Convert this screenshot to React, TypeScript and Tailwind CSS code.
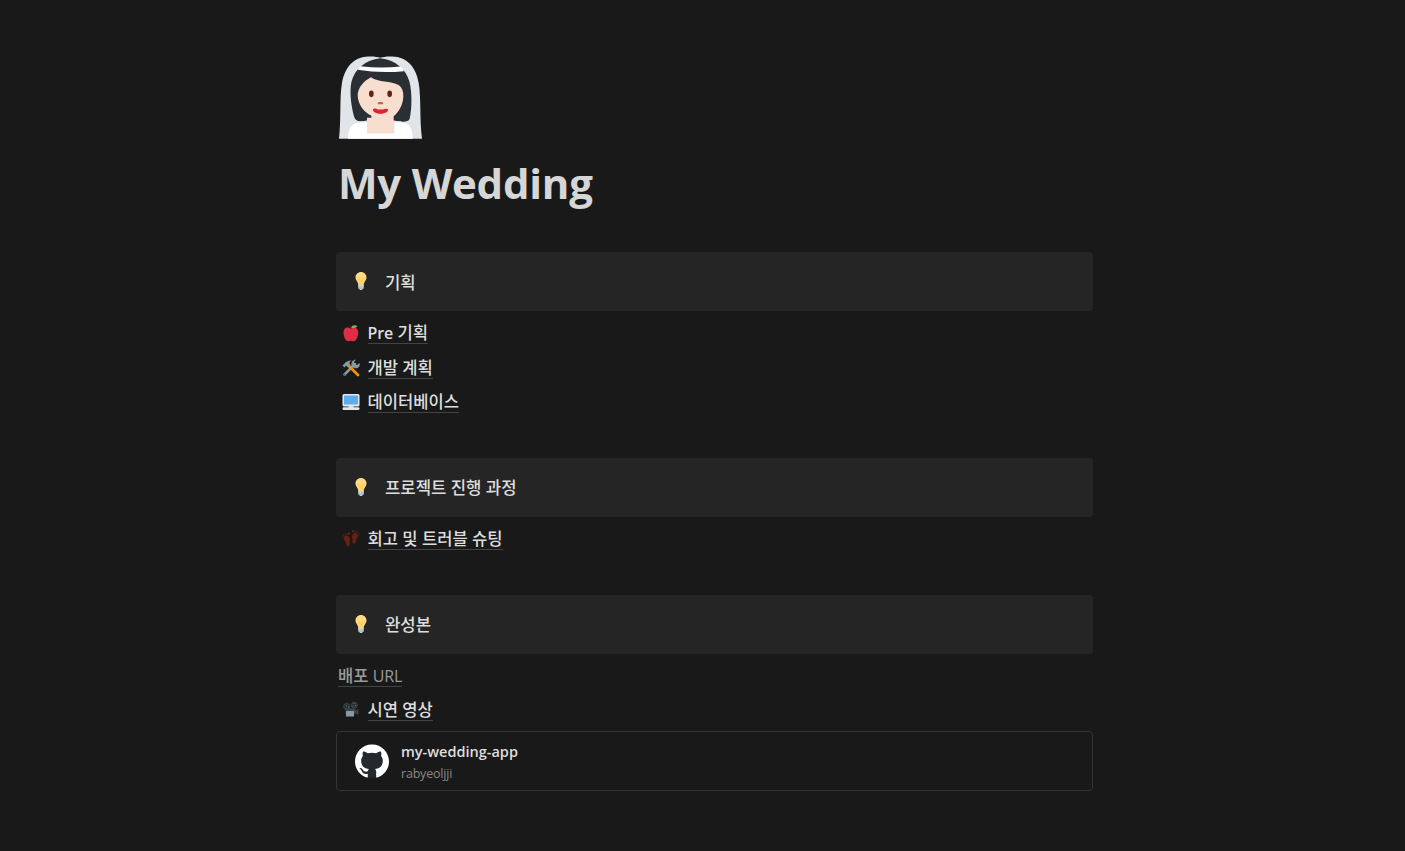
import type { ReactNode } from "react";
import { SiGithub } from "react-icons/si";

function Bride() {
  return (
    <svg viewBox="27 20 249 248" className="block h-[83px] w-[83px]">
      <path fill="#e1e4e8" d="M27 268C34 205 28 150 36 100C45 52 72 22 115 21C130 20 142 22 151 25C160 22 172 20 187 21C230 22 258 52 266 100C274 150 268 205 276 268Z" />
      <path fill="#292f33" d="M151 26C106 31 74 58 64 98C58 130 64 172 73 204C77 213 86 216 96 216H208C220 218 236 218 239 208C246 175 246 130 239 98C228 58 196 31 151 26Z" />
      <path fill="#e1e4e8" d="M88 215Q120 215 127 203H175Q182 215 215 215L212 225H90Z" />
      <path fill="#f7dece" d="M83 137C84 112 103 93 123 83C145 99 182 93 207 107C216 114 220 124 220 140C219 168 205 188 191 200V254H111V205H124V199C102 187 84 166 83 137Z" />
      <path fill="#fff" d="M54 268C54 235 65 219 91 219H111V252H193V219H211C238 219 248 236 248 268Z" />
      <path fill="#fff" d="M91 50Q151 58 212 51Q222 59 221 65Q151 72 83 61Q85 55 91 50Z" />
      <ellipse cx="124" cy="133" rx="7" ry="10" fill="#662113" />
      <ellipse cx="179" cy="133" rx="7" ry="10" fill="#662113" />
      <path d="M147 161H156" stroke="#c1694f" strokeWidth="7" strokeLinecap="round" />
      <path fill="#df1f32" d="M129 180C132 175 137 178 144 180H159C166 179 171 175 174 180C176 184 167 193 151 193C136 193 127 184 129 180Z" />
    </svg>
  );
}

function Bulb() {
  return (
    <svg viewBox="0 0 36 36" className="mb-[1px] block size-[18px]">
      <path fill="#ffd983" d="M29 11.06C29 17 23.4 19.3 23.4 26.9C23.4 28.2 22.7 28.9 21.5 28.9H14.5C13.3 28.9 12.6 28.2 12.6 26.9C12.6 19.3 7 17 7 11.06C7 5.1 11.9.14 18 .14S29 5.1 29 11.06Z" />
      <path fill="none" stroke="#ffcc4d" strokeWidth="1.8" d="M16 28V18.5L12 15Q10 12 13 11.5Q16 12 16 18.5H20Q20 12 23 11.5Q26 12 24 15L20 18.5V28" />
      <path fill="#ccd6dd" d="M12.5 26H23.5V32.5L21 34.5L19.5 36H16.5L15 34.5L12.5 32.5Z" />
      <path stroke="#8899a6" strokeWidth="1" d="M12.5 31L23.5 29M13 34L23.3 32" />
    </svg>
  );
}

function Apple() {
  return (
    <svg viewBox="0 0 36 36" className="block size-[18px]">
      <path fill="#dd2e44" d="M24 7C21 6.8 20 8.5 17.5 8.5S13 6.8 10 7C5.5 7.3 3 11.5 3 17C3 24 6.5 34.5 13 34.5C15 34.5 16 33.6 18 33.6S21 34.5 23 34.5C29 34.5 32.5 24 32.5 17C32.5 11 29 7.2 24 7Z" />
      <path fill="none" stroke="#662113" strokeWidth="2" d="M18 10Q17 4 14.5 2" />
      <path fill="#77b255" d="M18 7C20 2 26 1.5 31 4C28 8.5 23 9 18 7Z" />
    </svg>
  );
}

function Tools() {
  return (
    <svg viewBox="0 0 36 36" className="block size-[18px]">
      <path stroke="#8899a6" strokeWidth="5" strokeLinecap="round" d="M5 31L26 10" />
      <path fill="#8899a6" d="M28 1L24 6L25 11L30 12L35 8Q37 15 31 18Q26 20 22 16L19 13Q18 7 21 4Q24 1 28 1Z" />
      <circle cx="5.5" cy="30.5" r="1.2" fill="#292f33" />
      <path stroke="#f4900c" strokeWidth="5.5" strokeLinecap="round" d="M14 14L32 32" />
      <path fill="#8899a6" d="M1 13L8 6Q13 2 19 3Q15 5 14.5 8L17 11L12 17L8 13L5 17Z" />
    </svg>
  );
}

function Desktop() {
  return (
    <svg viewBox="0 0 36 36" className="mb-px block size-[18px]">
      <path fill="#ccd6dd" d="M13 25H23V30H13Z" />
      <rect x="1" y="2" width="34" height="25" rx="3" fill="#e1e8ed" />
      <rect x="4" y="5" width="28" height="18" rx="1" fill="#5dadec" />
      <rect x="1" y="28.5" width="34" height="5.5" rx="2.5" fill="#e1e8ed" />
    </svg>
  );
}

function Footprints() {
  return (
    <svg viewBox="0 0 36 36" className="mb-px block size-[18px]">
      <g fill="#662113">
        <path d="M4 16C8 11 14 13 15.5 18C16.5 22 14.8 24 15.5 28C16 32 14.5 34.5 11.5 34.5C8 34 8.5 30 7.7 27C6.8 23 1.5 20 4 16Z" />
        <path d="M32 11C28 6 22 8 20.5 13C19.5 17 21.5 19 20.8 23C20 27 21.5 29.5 24.5 29.5C28 29 27.5 25 28.3 22C29.6 18 34.5 15 32 11Z" />
        <circle cx="14" cy="9.5" r="2.3" /><circle cx="9.8" cy="9.5" r="1.6" /><circle cx="6.5" cy="10.5" r="1.4" /><circle cx="3.5" cy="12.5" r="1.3" /><circle cx="1.5" cy="15.5" r="1.1" />
        <circle cx="22" cy="4.5" r="2.3" /><circle cx="26.5" cy="4.5" r="1.6" /><circle cx="29.8" cy="5.5" r="1.4" /><circle cx="32.7" cy="7.5" r="1.3" /><circle cx="34.5" cy="10.5" r="1.1" />
      </g>
    </svg>
  );
}

function Projector() {
  return (
    <svg viewBox="0 0 36 36" className="block size-[18px]">
      <g fill="#292f33" stroke="#4d5961" strokeWidth="1.2">
        <circle cx="9.5" cy="11" r="6.2" />
        <circle cx="24.5" cy="8.5" r="6.2" />
      </g>
      <path fill="#66757f" d="M8 9h2v2H8zM12 11h2v2h-2zM23 4h2v2h-2zM26 8h2v2h-2zM21 9h2v2h-2zM7 14h2v2H7z" />
      <path fill="#3b454c" d="M7 15H27V20L33 16V28L27 24V26H7Z" />
      <rect x="8" y="20" width="16" height="11" rx="1" fill="#8899a6" />
    </svg>
  );
}

function Callout({ children }: { children: ReactNode }) {
  return (
    <div className="flex h-[59.4px] items-center rounded-[4px] bg-[#252525] pl-4">
      <Bulb />
      <span className="ml-[15px] whitespace-nowrap pt-[2px] text-[16.7px] font-medium leading-6 text-[#dedede]">{children}</span>
    </div>
  );
}

function PageLink({ icon, children }: { icon: ReactNode; children: ReactNode }) {
  return (
    <div className="flex h-[34.4px] items-center pl-[5.5px]">
      {icon}
      <span className="ml-2 block h-[22px] whitespace-nowrap border-b border-[#434343] text-[16.6px] font-medium leading-[22px] text-[#dedede]">
        {children}
      </span>
    </div>
  );
}

export default function App() {
  return (
    <main className="h-[851px] overflow-hidden bg-[#191919] pl-[336px] font-['Open_Sans','Noto_Sans_CJK_KR',sans-serif]">
      <div className="flex w-[757px] flex-col pt-[56px]">
        <div className="pl-[3px]"><Bride /></div>
        <h1 className="mt-[15px] h-[58px] whitespace-nowrap pl-[2px] text-[42px] font-bold leading-[58px] tracking-[-0.25px] text-[#d6d6d6]">My Wedding</h1>

        <section className="mt-[40px]">
          <Callout>기획</Callout>
          <div className="pt-[4.9px]">
            <PageLink icon={<Apple />}>
              <span className="text-[16px] font-semibold tracking-[-0.1px]">Pre</span> 기획
            </PageLink>
            <PageLink icon={<Tools />}>개발 계획</PageLink>
            <PageLink icon={<Desktop />}>데이터베이스</PageLink>
          </div>
        </section>

        <section className="mt-[38.1px]">
          <Callout>프로젝트 진행 과정</Callout>
          <div className="pt-[4.7px]">
            <PageLink icon={<Footprints />}>회고 및 트러블 슈팅</PageLink>
          </div>
        </section>

        <section className="mt-[38.6px]">
          <Callout>완성본</Callout>
          <div className="pt-[4.5px]">
            <div className="flex h-[34.3px] items-center pl-[2px]">
              <span className="block h-[22px] whitespace-nowrap border-b border-[#434343] text-[16.6px] leading-[22px] text-[#9b9b9b]">
                <b className="font-medium">배포</b> <span className="text-[16px] tracking-[-0.2px]">URL</span>
              </span>
            </div>
            <div className="pt-[0.5px]">
              <PageLink icon={<Projector />}>시연 영상</PageLink>
            </div>
          </div>
        </section>

        <div className="mt-[3px] flex h-[60px] items-center rounded-[4px] border border-[#343434] pl-[18px]">
          <span className="flex size-[34px] rounded-full bg-[#24292e]">
            <SiGithub className="size-[34px] text-white" />
          </span>
          <div className="ml-3 flex flex-col whitespace-nowrap pt-[3px]">
            <span className="text-[14.5px] font-semibold leading-[22px] text-[#dedede]">my-wedding-app</span>
            <span className="text-[12.5px] leading-[21px] tracking-[-0.2px] text-[#888888]">rabyeoljji</span>
          </div>
        </div>
      </div>
    </main>
  );
}
